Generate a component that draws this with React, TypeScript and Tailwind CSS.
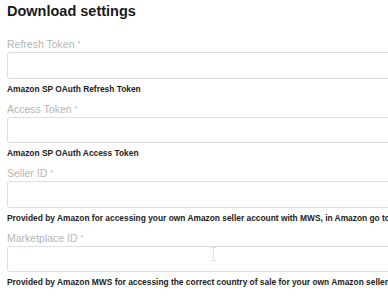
const FIELDS = [
  { label: "Refresh Token", help: "Amazon SP OAuth Refresh Token" },
  { label: "Access Token", help: "Amazon SP OAuth Access Token" },
  {
    label: "Seller ID",
    help: "Provided by Amazon for accessing your own Amazon seller account with MWS, in Amazon go to Settings > Account Info",
  },
  {
    label: "Marketplace ID",
    help: "Provided by Amazon MWS for accessing the correct country of sale for your own Amazon seller account",
  },
];

export default function App() {
  return (
    <div className="relative h-[297px] w-[388px] overflow-hidden bg-white pl-[7px] pt-[2px] font-['Liberation_Sans',Arial,sans-serif]">
      <h1 className="text-[14.5px] font-bold leading-[18px] text-[#1a1a1a]">Download settings</h1>
      <div className="mt-[18px] flex flex-col gap-[9px]">
        {FIELDS.map((f) => (
          <Field key={f.label} label={f.label} help={f.help} />
        ))}
      </div>
      {/* text cursor hovering over the last input */}
      <svg className="absolute left-[210px] top-[247px]" width="7" height="14" viewBox="0 0 7 14" aria-hidden>
        <path d="M1 0.5h5M3.5 0.5v13M1 13.5h5" stroke="#e2e2e2" strokeWidth="1" fill="none" />
      </svg>
    </div>
  );
}

function Field({ label, help }: { label: string; help: string }) {
  return (
    <div className="flex flex-col">
      <label className="h-[12px] text-[10.5px] leading-[12px] text-[#b5b5b5]">
        {label} <span className="relative top-[-2px] align-baseline text-[7px] leading-none">*</span>
      </label>
      <div className="mt-[2px] h-[26.5px] w-[400px] rounded-[3px] border border-[#dedede] bg-white" />
      <p className="mt-[5px] h-[10px] whitespace-nowrap text-[8.4px] font-bold leading-[10px] text-[#222]">{help}</p>
    </div>
  );
}
